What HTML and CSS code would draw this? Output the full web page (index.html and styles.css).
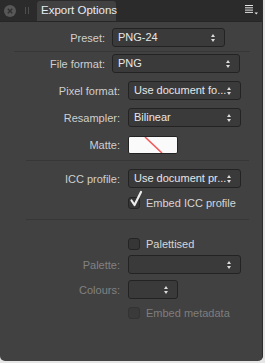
FILE: index.html
```html
<!DOCTYPE html>
<html lang="en">
<head>
  <meta charset="UTF-8" />
  <title>Export Options</title>
  <link rel="stylesheet" href="styles.css">
</head>
<body>
  <div class="panel">
    <header class="titlebar">
      <span class="close-btn">
        <svg width="12" height="12" viewBox="0 0 12 12"><circle cx="6" cy="6" r="6" fill="#575757"/><path d="M3.8 3.8L8.2 8.2M8.2 3.8L3.8 8.2" stroke="#2f2f2f" stroke-width="1.4"/></svg>
      </span>
      <span class="grip"></span>
      <div class="tab">Export Options</div>
      <span class="menu-btn">
        <svg width="14" height="10" viewBox="0 0 14 10"><path d="M0 .5h8M0 2.8h8M0 5.1h8M0 7.4h8" stroke="#e4e4e4" stroke-width="1"/><path d="M9.5 7.5h3.5l-1.75 2z" fill="#e4e4e4"/></svg>
      </span>
    </header>

    <main class="content">
      <div class="row row-a first">
        <label>Preset:</label>
        <div class="select w-preset">PNG-24<span class="arrows"></span></div>
      </div>
      <hr class="sep wide">
      <div class="row row-a">
        <label>File format:</label>
        <div class="select w-file">PNG<span class="arrows"></span></div>
      </div>
      <div class="row row-b gap8">
        <label>Pixel format:</label>
        <div class="select w-full">Use document fo...<span class="arrows"></span></div>
      </div>
      <div class="row row-b gap8">
        <label>Resampler:</label>
        <div class="select w-full">Bilinear<span class="arrows"></span></div>
      </div>
      <div class="row row-b gap8">
        <label>Matte:</label>
        <div class="matte">
          <svg width="48" height="16" viewBox="0 0 48 16"><path d="M16 0L33 16" stroke="#f25a5a" stroke-width="1.6"/></svg>
        </div>
      </div>
      <hr class="sep narrow s2">
      <div class="row row-b icc">
        <label>ICC profile:</label>
        <div class="select w-full">Use document pr...<span class="arrows"></span></div>
      </div>
      <div class="check-row embed-icc">
        <span class="checkbox checked">
          <svg class="tick" width="14" height="18" viewBox="0 0 14 18"><path d="M2.5 10.5L5.5 15L12 2" fill="none" stroke="#ececec" stroke-width="2.2" stroke-linecap="round" stroke-linejoin="round"/></svg>
        </span>
        <span>Embed ICC profile</span>
      </div>
      <hr class="sep narrow s3">
      <div class="check-row palettised">
        <span class="checkbox"></span>
        <span>Palettised</span>
      </div>
      <div class="row row-b disabled palette">
        <label>Palette:</label>
        <div class="select w-full"><span class="arrows"></span></div>
      </div>
      <div class="row row-b disabled colours">
        <label>Colours:</label>
        <div class="select w-small"><span class="arrows"></span></div>
      </div>
      <div class="check-row disabled metadata">
        <span class="checkbox"></span>
        <span>Embed metadata</span>
      </div>
    </main>
  </div>
</body>
</html>
```

FILE: styles.css
```css
*,*::before,*::after{box-sizing:border-box;margin:0;padding:0;}
body{
  background:#e6e6e6;
  font-family:'Liberation Sans', Arial, sans-serif;
  font-size:11px;
  color:#cfcfcf;
}
.panel{
  width:263px;height:361px;
  background:#414141;
  border-radius:0 0 5px 5px;
  overflow:hidden;
  border-right:1px solid #2c2c2c;
}
.titlebar{
  height:22px;
  background:#2b2b2b;
  border-bottom:1px solid #262626;
  display:flex;align-items:flex-end;
}
.close-btn{display:flex;margin:0 0 4px 4px;}
.grip{
  width:4px;height:7px;margin:0 0 7px 9px;
  border-left:1px solid #4e4e4e;border-right:1px solid #4e4e4e;
}
.tab{
  margin-left:8px;
  width:79px;height:20px;
  background:#414141;
  border-radius:3px 3px 0 0;
  padding:3px 0 0 4px;
  color:#e6ecf4;
  font-size:11.5px;
  white-space:nowrap;
}
.menu-btn{display:flex;margin:0 3px 6px auto;}

.content{padding-top:6px;}
.row{display:flex;align-items:center;height:19px;}
.row label{text-align:right;flex:none;}
.row-a label{width:105px;margin-right:7px;}
.row-b label{width:120px;margin-right:8px;}
.row.gap8{margin-top:8px;}
.row.icc{margin-top:8px;}
.row.palette{margin-top:5px;}
.row.colours{margin-top:6px;}
.disabled,.disabled label{color:#828282;}

.select{
  position:relative;
  height:19px;
  background:#3a3a3a;
  border:1px solid #232323;
  border-radius:3px;
  color:#e6e6e6;
  padding:2px 0 0 5px;
  white-space:nowrap;
  overflow:hidden;
}
.w-preset{width:113px;}
.w-file{width:128px;}
.w-full{width:113px;}
.w-small{width:50px;}
.arrows{
  position:absolute;right:8px;top:5px;
  width:5px;height:8px;
}
.arrows::before,.arrows::after{
  content:"";position:absolute;left:0;
  border-left:2.5px solid transparent;border-right:2.5px solid transparent;
}
.arrows::before{top:0;border-bottom:3px solid #dcdcdc;}
.arrows::after{bottom:0;border-top:3px solid #dcdcdc;}

.matte{
  width:50px;height:18px;
  background:#fafafa;
  border:1px solid #232323;
  border-radius:2px;
  display:flex;
}

.sep{border:0;height:1px;background:#373737;}
.sep.wide{margin:4px 12px 2px 14px;}
.sep.narrow{margin-left:26px;margin-right:13px;}
.sep.s2{margin-top:6px;}
.sep.s3{margin-top:10px;}

.check-row{
  display:flex;align-items:center;gap:6px;
  height:12px;
  padding-left:128px;
  color:#d6d6d6;
}
.check-row.embed-icc{margin-top:9px;}
.check-row.palettised{margin-top:18px;}
.check-row.metadata{margin-top:8px;}
.check-row.disabled{color:#7e7e7e;}
.checkbox{
  position:relative;
  width:12px;height:12px;flex:none;
  background:#363636;
  border:1px solid #242424;
  border-radius:3px;
}
.check-row.disabled .checkbox{background:#3a3a3a;border-color:#333;}
.tick{position:absolute;left:0;top:-8px;}
```
